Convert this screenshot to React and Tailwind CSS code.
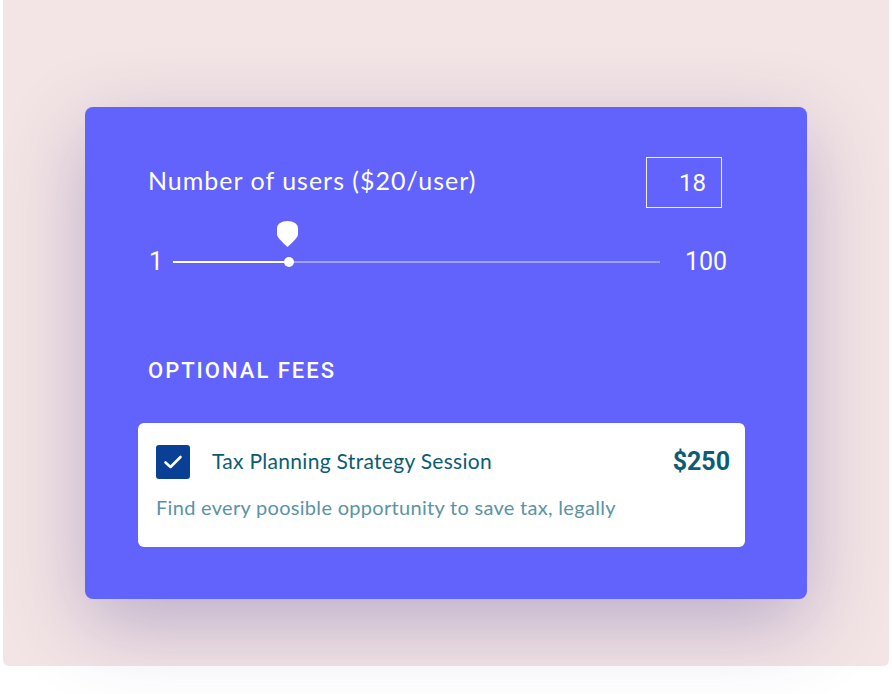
import { useState } from 'react'

const MIN = 1
const MAX = 100

function Shield() {
  return (
    <svg width="21" height="26" viewBox="0 0 21 26" className="block">
      <path
        d="M10.5 0C16.3 0 21 2.8 21 7.5V13C21 16 17.5 19.5 10.5 26C3.5 19.5 0 16 0 13V7.5C0 2.8 4.7 0 10.5 0Z"
        fill="#ffffff"
      />
    </svg>
  )
}

function Check() {
  return (
    <svg width="20" height="16" viewBox="0 0 20 16" fill="none">
      <path d="M2.5 8.5L7.5 13L17.5 3" stroke="#ffffff" strokeWidth="2.6" strokeLinecap="round" strokeLinejoin="round" />
    </svg>
  )
}

export default function App() {
  const [users] = useState(18)
  const [checked, setChecked] = useState(true)

  return (
    <div className="min-h-screen bg-white">
      <div className="ml-[3px] w-[886px] h-[666px] rounded-b-[6px] bg-[#f3e5e5] pt-[107px] flex justify-center">
        <div className="w-[722px] h-[492px] rounded-[8px] bg-[#6262fd] shadow-[0_25px_80px_rgba(60,40,140,0.3)] pt-[50px]">
          <div className="pl-[63px]">
            <div className="flex items-center justify-between h-[51px] pr-[85px]">
              <h2 className="mb-[5px] text-[25px] leading-[30px] text-white tracking-[1px] font-['Lato',sans-serif]">
                Number of users ($20/user)
              </h2>
              <div className="w-[76px] h-[51px] border border-white/90 flex items-center justify-end pr-[15px] text-[24px] text-white font-['Roboto',sans-serif]">
                {users}
              </div>
            </div>

            <div className="mt-[39px] h-[30px] flex items-center text-[25px] text-white font-['Roboto',sans-serif]">
              <span className="w-[10px] ml-[1px] shrink-0">{MIN}</span>
              <div className="relative shrink-0 ml-[14px] w-[487px] h-[2px] bg-white/40">
                <div className="absolute left-0 top-0 h-[2px] w-[116px] bg-white" />
                <div className="absolute left-[111px] top-[-4px] w-[10px] h-[10px] rounded-full bg-white" />
                <div className="absolute left-[104px] top-[-40px]">
                  <Shield />
                </div>
              </div>
              <span className="ml-[25px] shrink-0">{MAX}</span>
            </div>

            <h3 className="mt-[80px] text-[22px] leading-[28px] font-medium tracking-[2px] text-white font-['Roboto',sans-serif]">
              OPTIONAL FEES
            </h3>
          </div>

          <div className="ml-[53px] mt-[38px] w-[607px] h-[124px] rounded-[6px] bg-white pt-[20px] pl-[18px] pr-[15px]">
            <div className="flex items-center">
              <button
                onClick={() => setChecked(!checked)}
                className="w-[34px] h-[34px] rounded-[3px] bg-[#0a3f96] flex items-center justify-center"
              >
                {checked && <Check />}
              </button>
              <span className="ml-[22px] mb-[2px] text-[21px] leading-[26px] tracking-[0.3px] text-[#0c5c74] font-['Lato',sans-serif]">
                Tax Planning Strategy Session
              </span>
              <span className="ml-auto text-[25px] font-bold text-[#0c5c74] font-['Roboto',sans-serif]">
                $250
              </span>
            </div>
            <p className="mt-[12px] text-[20px] leading-[28px] text-[#5a93a8] tracking-[0.3px] font-['Lato',sans-serif]">
              Find every poosible opportunity to save tax, legally
            </p>
          </div>
        </div>
      </div>
    </div>
  )
}
